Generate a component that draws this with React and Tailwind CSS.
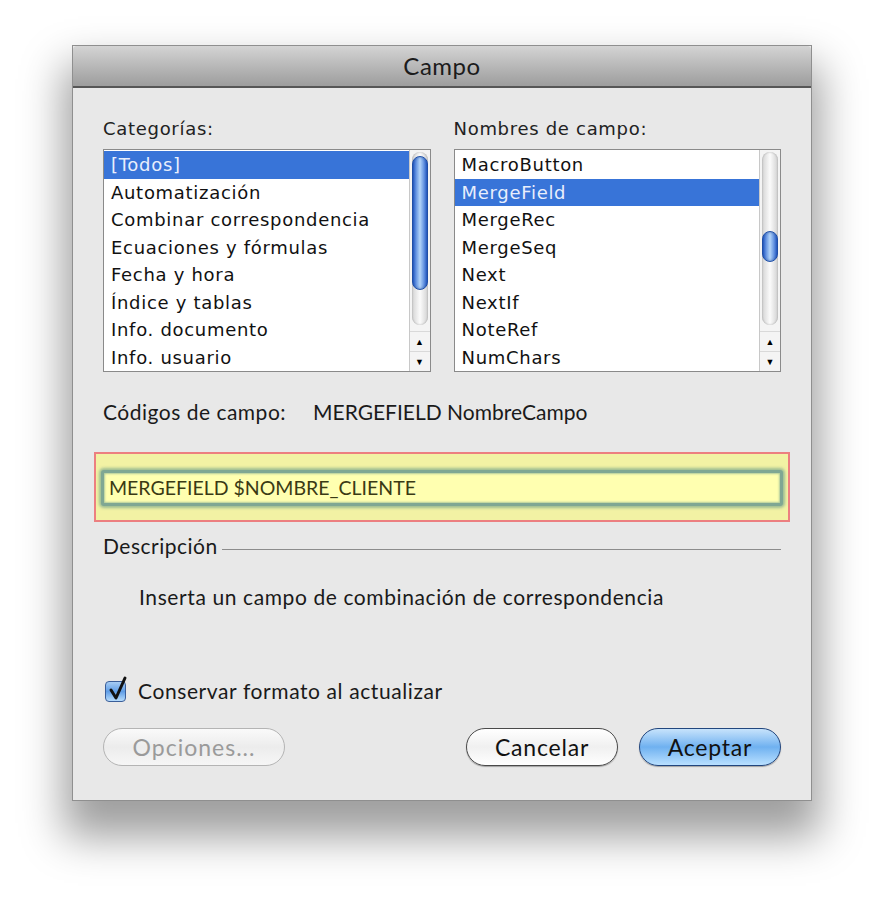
import { useState } from "react";

const CATEGORIAS = [
  "[Todos]",
  "Automatización",
  "Combinar correspondencia",
  "Ecuaciones y fórmulas",
  "Fecha y hora",
  "Índice y tablas",
  "Info. documento",
  "Info. usuario",
];

const NOMBRES = [
  "MacroButton",
  "MergeField",
  "MergeRec",
  "MergeSeq",
  "Next",
  "NextIf",
  "NoteRef",
  "NumChars",
];

const lucida = { fontFamily: '"DejaVu Sans", "Liberation Sans", sans-serif' };
const humanist = { fontFamily: 'Lato, "Open Sans", sans-serif' };

function ScrollBar({ thumbTop, thumbHeight }) {
  return (
    <div className="flex w-[21px] flex-col border-l border-[#c8c8c8] bg-[#f4f4f4]">
      <div className="flex-1 px-[2px] pt-[2px]">
        <div className="flex h-full flex-col rounded-full bg-gradient-to-r from-[#d4d4d4] via-[#fbfbfb] to-[#d2d2d2] shadow-[inset_0_0_2px_rgba(0,0,0,0.3)]">
          <div
            className="rounded-full border border-[#1f4fa6] bg-gradient-to-r from-[#2a5fcc] via-[#b3d4f8] to-[#2a5fcc] shadow-[inset_0_0_3px_rgba(20,60,140,0.6)]"
            style={{ marginTop: thumbTop, height: thumbHeight }}
          />
        </div>
      </div>
      <div className="mt-[6px] flex h-[20px] items-center justify-center border-t border-[#d9d9d9] text-[9px] leading-none text-black">
        ▲
      </div>
      <div className="flex h-[20px] items-center justify-center border-t border-[#d9d9d9] text-[9px] leading-none text-black">
        ▼
      </div>
    </div>
  );
}

function ListBox({ items, selected, thumbTop, thumbHeight }) {
  return (
    <div className="flex h-[223px] border border-[#8a8a8a] bg-white">
      <div className="flex-1 pt-[1px]">
        {items.map((item, i) => (
          <div
            key={item}
            className={
              "h-[27.5px] pl-[7px] text-[18px] leading-[27px] tracking-[0.7px] " +
              (i === selected ? "bg-[#3874d8] text-[#e8eefc]" : "text-[#111]")
            }
            style={lucida}
          >
            {item}
          </div>
        ))}
      </div>
      <ScrollBar thumbTop={thumbTop} thumbHeight={thumbHeight} />
    </div>
  );
}

function CheckBox() {
  return (
    <div className="relative h-[21px] w-[21px] rounded-[4px] border border-[#3a5e99] bg-gradient-to-b from-[#a7cdf4] via-[#5f9de6] to-[#b7dcfb]">
      <svg className="absolute left-[2px] top-[-6px]" width="20" height="26" viewBox="0 0 20 26">
        <path d="M3 14 L8 22 L17 2" fill="none" stroke="#111" strokeWidth="3" strokeLinecap="round" strokeLinejoin="round" />
      </svg>
    </div>
  );
}

export default function App() {
  const [conservar] = useState(true);

  return (
    <div className="h-[900px] w-[886px] bg-white pl-[72px] pt-[45px]">
      <div className="flex h-[756px] w-[740px] flex-col border border-[#8f8f8f] bg-[#e8e8e8] shadow-[0_28px_40px_8px_rgba(0,0,0,0.38)]">
        <div className="flex h-[42px] items-center justify-center rounded-t-[4px] border-b-2 border-[#565656] bg-gradient-to-b from-[#d4d4d4] to-[#9d9d9d]">
          <span className="text-[24px] tracking-[0.5px] text-[#1c1c1c]" style={humanist}>
            Campo
          </span>
        </div>

        <div className="flex flex-1 flex-col px-[30px] pt-[30px]">
          <div className="flex gap-[23px]">
            <div className="w-[328px]">
              <div className="mb-[10px] text-[18px] leading-[21px] tracking-[0.7px] text-[#222]" style={lucida}>
                Categorías:
              </div>
              <ListBox items={CATEGORIAS} selected={0} thumbTop={4} thumbHeight={134} />
            </div>
            <div className="w-[328px]">
              <div className="mb-[10px] text-[18px] leading-[21px] tracking-[0.7px] text-[#222]" style={lucida}>
                Nombres de campo:
              </div>
              <ListBox items={NOMBRES} selected={1} thumbTop={79} thumbHeight={31} />
            </div>
          </div>

          <div className="mt-[29px] flex text-[21px] leading-[22px] text-[#1a1a1a]" style={humanist}>
            <span className="w-[210px] tracking-[0.5px]">Códigos de campo:</span>
            <span>MERGEFIELD NombreCampo</span>
          </div>

          <div className="-mx-[9px] mt-[29px] h-[70px] border-2 border-[#ec7f80] bg-[#f2f2a4] px-[5px] pt-[16px]">
            <div className="flex h-[36px] items-center rounded-[3px] border-[3px] border-[#7fa793] bg-[#ffffb0] pl-[5px] shadow-[0_0_3px_2px_rgba(120,165,140,0.7),inset_0_0_2px_1px_rgba(120,165,140,0.6)]">
              <span className="text-[19.5px] text-[#3a3a14]" style={humanist}>
                MERGEFIELD $NOMBRE_CLIENTE
              </span>
            </div>
          </div>

          <div className="mt-[12px] flex items-center gap-[4px]" style={humanist}>
            <span className="text-[21px] leading-[24px] tracking-[0.5px] text-[#1a1a1a]">Descripción</span>
            <div className="mt-[7px] h-px flex-1 bg-[#8c8c8c]" />
          </div>

          <div className="mt-[27px] pl-[36px] text-[21px] leading-[24px] tracking-[0.6px] text-[#1a1a1a]" style={humanist}>
            Inserta un campo de combinación de correspondencia
          </div>

          <div className="mt-[70px] flex items-center gap-[12px] pl-[2px]">
            {conservar && <CheckBox />}
            <span className="text-[21px] leading-[24px] tracking-[0.6px] text-[#1a1a1a]" style={humanist}>
              Conservar formato al actualizar
            </span>
          </div>

          <div className="mt-[25px] flex items-center" style={humanist}>
            <button className="h-[38px] w-[182px] rounded-full border border-[#b4b4b4] bg-gradient-to-b from-[#fafafa] via-[#ececec] to-[#f6f6f6] text-[23px] tracking-[1px] text-[#9a9a9a]">
              Opciones...
            </button>
            <div className="flex-1" />
            <button className="h-[38px] w-[152px] rounded-full border border-[#4a4a4a] bg-gradient-to-b from-[#ffffff] via-[#f0f0f0] to-[#ffffff] text-[23px] tracking-[0.8px] text-[#111] shadow-[0_1px_1px_rgba(0,0,0,0.3)]">
              Cancelar
            </button>
            <button className="ml-[21px] h-[38px] w-[142px] rounded-full border border-[#22467e] bg-gradient-to-b from-[#c7e3fb] via-[#6fb1f0] to-[#b9e0ff] text-[23px] tracking-[0.8px] text-[#111] shadow-[0_1px_1px_rgba(0,0,0,0.3)]">
              Aceptar
            </button>
          </div>
        </div>
      </div>
    </div>
  );
}
